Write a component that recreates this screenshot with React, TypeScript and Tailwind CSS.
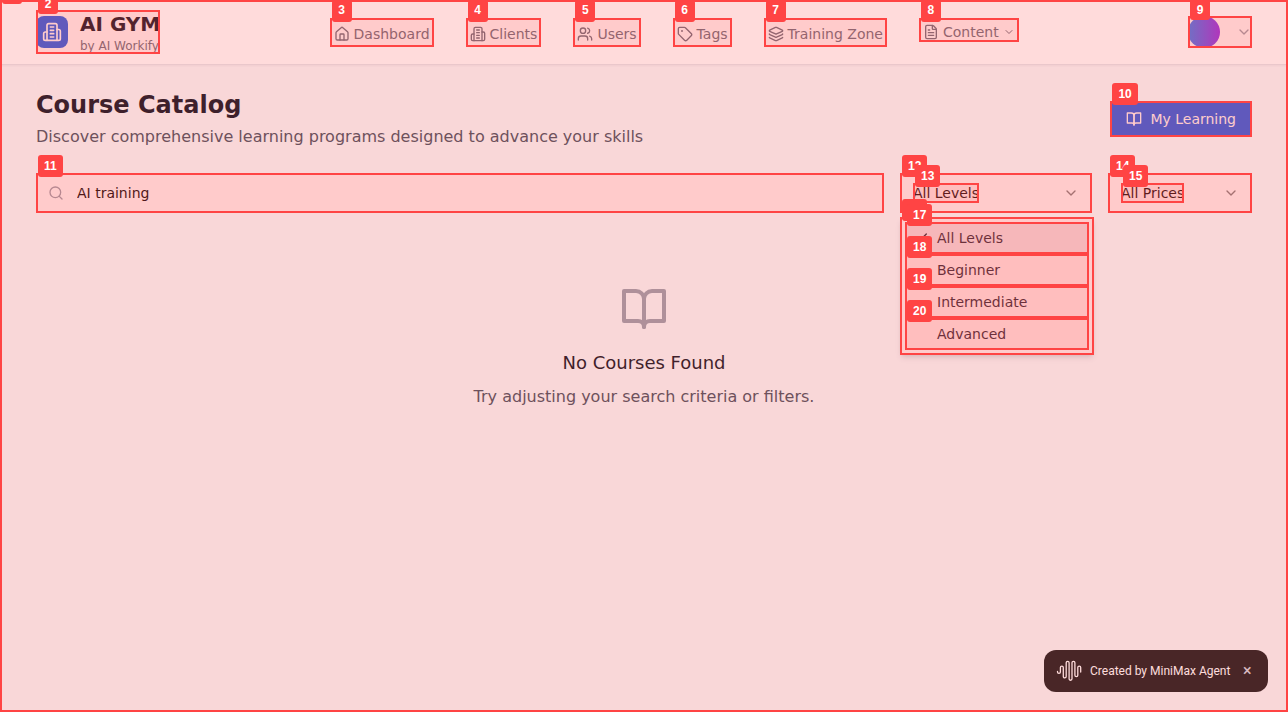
import React, { useState } from "react";
import { ChevronDown, FileText, House, Layers, Search, Tag, Users, Check } from "lucide-react";

type IconProps = { className?: string };

function BuildingIcon({ className }: IconProps) {
  return (
    <svg viewBox="0 0 24 24" fill="none" stroke="currentColor" strokeWidth="2" strokeLinecap="round" strokeLinejoin="round" className={className} aria-hidden="true">
      <path d="M6 22V4a2 2 0 0 1 2-2h8a2 2 0 0 1 2 2v18Z" />
      <path d="M6 12H4a2 2 0 0 0-2 2v6a2 2 0 0 0 2 2h2" />
      <path d="M18 9h2a2 2 0 0 1 2 2v9a2 2 0 0 1-2 2h-2" />
      <path d="M10 6h4M10 10h4M10 14h4M10 18h4" />
    </svg>
  );
}

function BookIcon({ className }: IconProps) {
  return (
    <svg viewBox="0 0 24 24" fill="none" stroke="currentColor" strokeWidth="2" strokeLinecap="round" strokeLinejoin="round" className={className} aria-hidden="true">
      <path d="M2 3h6a4 4 0 0 1 4 4v14a3 3 0 0 0-3-3H2z" />
      <path d="M22 3h-6a4 4 0 0 0-4 4v14a3 3 0 0 1 3-3h7z" />
    </svg>
  );
}

function WaveIcon({ className }: IconProps) {
  return (
    <svg viewBox="0 0 26 22" fill="none" stroke="currentColor" strokeWidth="1.3" strokeLinecap="round" className={className} aria-hidden="true">
      <path d="M1.500 11.500v.5a1.450 1.450 0 0 0 2.900 0V7.500a1.450 1.450 0 0 1 2.900 0v9a1.450 1.450 0 0 0 2.900 0V2.800a1.450 1.450 0 0 1 2.900 0V18.800a1.450 1.450 0 0 0 2.900 0V2.800a1.450 1.450 0 0 1 2.900 0V15.200a1.450 1.450 0 0 0 2.900 0V7.500a1.450 1.450 0 0 1 2.900 0V12" />
    </svg>
  );
}

/* Numbered outline laid over its nearest positioned parent. */
function Mark({ n, area = "inset-0" }: { n: number; area?: string }) {
  return (
    <span className={`pointer-events-none absolute z-20 border-2 border-[#ff4444] bg-[#ff4444]/10 ${area}`} aria-hidden="true">
      <span className="absolute -top-5 left-0 flex h-[22px] min-w-5 items-center justify-center rounded-[3px] bg-[#ff4444] px-1.5 pt-px font-['Liberation_Sans',sans-serif] text-[12px] font-bold text-white">
        {n}
      </span>
    </span>
  );
}

const links = [
  { n: 3, label: "Dashboard", icon: House },
  { n: 4, label: "Clients", icon: BuildingIcon },
  { n: 5, label: "Users", icon: Users },
  { n: 6, label: "Tags", icon: Tag },
  { n: 7, label: "Training Zone", icon: Layers },
];

const levels = ["All Levels", "Beginner", "Intermediate", "Advanced"];

function Header() {
  return (
    <header className="border-b border-[#e5e7eb] bg-white shadow-xs">
      <div className="mx-auto flex h-16 max-w-7xl items-center justify-between px-8">
        <a href="#home" className="relative flex items-center gap-3">
          <span className="flex size-8 items-center justify-center rounded-lg bg-[#2563eb] text-white">
            <BuildingIcon className="size-5" />
          </span>
          <span className="flex flex-col">
            <span className="text-xl font-bold text-[#111827]">AI GYM</span>
            <span className="text-xs text-[#6b7280]">by AI Workify</span>
          </span>
          <Mark n={2} />
        </a>
        <nav className="flex items-start gap-8 text-sm text-[#6b7280]">
          {links.map(({ n, label, icon: Icon }) => (
            <a key={n} href={`#${label}`} className="relative flex h-[29px] items-center gap-1 px-1 pt-[3px]">
              <Icon className="size-4" />
              {label}
              <Mark n={n} />
            </a>
          ))}
          <button type="button" className="relative flex h-6 items-center gap-1 px-1 pt-1">
            <FileText className="size-4" />
            Content
            <ChevronDown className="size-3" />
            <Mark n={8} />
          </button>
        </nav>
        <button type="button" aria-label="Account menu" className="relative flex items-center gap-4 text-[#9ca3af]">
          <span className="size-8 rounded-full bg-linear-to-r/srgb from-[#3b82f6] to-[#9333ea]" />
          <ChevronDown className="size-4" />
          <Mark n={9} />
        </button>
      </div>
    </header>
  );
}

function Filters() {
  const [level, setLevel] = useState("All Levels");
  const [query, setQuery] = useState("AI training");
  return (
    <div className="mb-6 flex gap-4 text-sm text-[#0a0a0a]">
      <div className="relative flex-1">
        <label htmlFor="course-search" className="sr-only">Search courses</label>
        <input
          id="course-search"
          value={query}
          onChange={(e) => setQuery(e.target.value)}
          className="block h-10 w-full border border-gray-200 bg-white pr-3 pl-10 outline-none"
        />
        <Search className="absolute top-3 left-3 size-4 text-[#9ca3af]" />
        <Mark n={11} />
      </div>
      <div className="relative w-48">
        <button
          type="button"
          role="combobox"
          aria-label="Level"
          aria-expanded="true"
          aria-controls="level-list"
          className="flex h-10 w-full items-center justify-between border border-gray-200 bg-white px-3"
        >
          {level}
          <ChevronDown className="size-4 opacity-50" />
        </button>
        <Mark n={12} />
        <Mark n={13} area="left-[13px] top-[10px] h-5 w-[66px]" />
        <ul id="level-list" role="listbox" aria-label="Level" className="absolute top-11 left-0 w-[194px] border border-gray-200 bg-white p-[5px] shadow-md">
          <Mark n={16} area="-inset-px" />
          {levels.map((name, i) => (
            <li
              key={name}
              role="option"
              aria-selected={name === level}
              onClick={() => setLevel(name)}
              className={`relative -mx-px flex h-8 items-center pl-8 text-gray-800 ${i === 0 ? "-mt-px" : ""} ${i === 3 ? "-mb-px" : ""} ${name === level ? "bg-slate-100" : "bg-white"}`}
            >
              {name === level && <Check className="absolute left-2 size-4" />}
              {name}
              <Mark n={17 + i} />
            </li>
          ))}
        </ul>
      </div>
      <div className="relative w-36">
        <select aria-label="Price" className="block h-10 w-full appearance-none border border-gray-200 bg-white px-3 outline-none">
          <option>All Prices</option>
          <option>Free</option>
          <option>Paid</option>
        </select>
        <ChevronDown className="pointer-events-none absolute top-3 right-[13px] size-4 opacity-50" />
        <Mark n={14} />
        <Mark n={15} area="left-[13px] top-[10px] h-5 w-[63px]" />
      </div>
    </div>
  );
}

export default function App() {
  const [badge, setBadge] = useState(true);
  return (
    <div className="relative min-h-screen overflow-hidden bg-[#f8fafc] font-['DejaVu_Sans',sans-serif]">
      <Mark n={1} />
      <div className="pointer-events-none absolute inset-0 z-10 bg-[#ff4444]/10" aria-hidden="true" />
      <Header />
      <main className="mx-auto max-w-7xl px-8 py-6">
        <div className="mb-6 flex items-center justify-between">
          <div>
            <h1 className="text-2xl font-bold text-[#111827]">Course Catalog</h1>
            <p className="mt-1 text-[#4b5563]">Discover comprehensive learning programs designed to advance your skills</p>
          </div>
          <button type="button" className="relative flex h-9 items-center gap-2 bg-[#2563eb] px-4 text-sm text-white">
            <BookIcon className="size-4" />
            My Learning
            <Mark n={10} />
          </button>
        </div>
        <Filters />
        <section className="flex flex-col items-center py-12 text-center">
          <BookIcon className="size-12 text-[#9ca3af]" />
          <h2 className="mt-4 text-lg text-[#111827]">No Courses Found</h2>
          <p className="mt-2 text-[#4b5563]">Try adjusting your search criteria or filters.</p>
        </section>
      </main>
      {badge && (
        <div className="fixed right-5 bottom-5 flex h-[42px] w-56 items-center rounded-xl bg-[#1e2021] pl-3 font-[Roboto,sans-serif] text-xs text-white">
          <WaveIcon className="mr-2 h-[22px] w-[26px]" />
          Created by MiniMax Agent
          <button type="button" aria-label="Close" onClick={() => setBadge(false)} className="ml-2 flex size-[18px] items-center justify-center text-base font-medium text-gray-300">
            ×
          </button>
        </div>
      )}
    </div>
  );
}
